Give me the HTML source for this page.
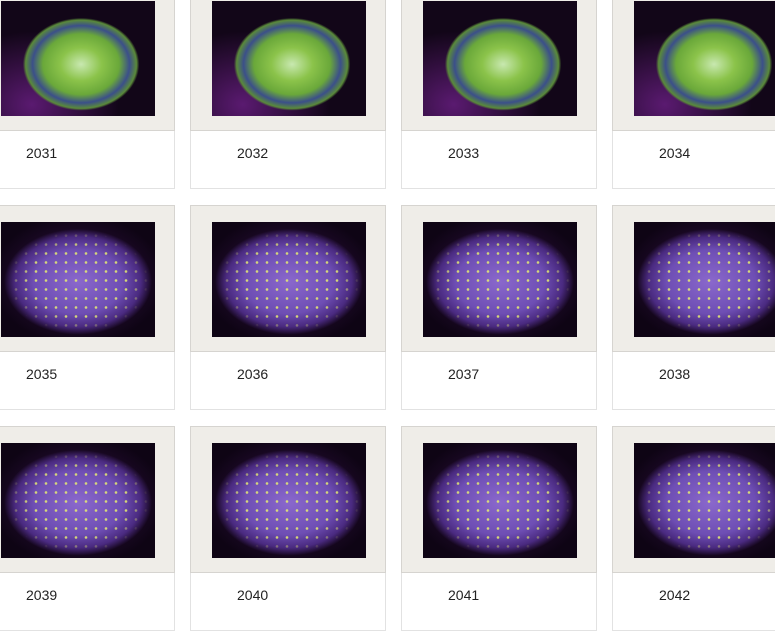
<!DOCTYPE html>
<html><head><meta charset="utf-8"><style>
body{margin:0;width:775px;height:625px;overflow:hidden;background:#fff;position:relative;font-family:"Liberation Sans",sans-serif}
.c{position:absolute;width:196px;height:204px}
.f{position:absolute;left:0;top:0;width:194px;height:145px;background:#efede8;border:1px solid #d6d4d0}
.l{position:absolute;left:0;top:147px;width:194px;height:57px;border-left:1px solid #e2e2e2;border-right:1px solid #e2e2e2;border-bottom:1px solid #e2e2e2}
.i{position:absolute;left:21px;top:16px;width:154px;height:115px;background:#0e0414;overflow:hidden}
.t{position:absolute;left:47px;top:161px;font-size:14px;color:#222}
.g{background:radial-gradient(ellipse 45% 48% at 52% 55%,#c8e8b0 0%,#8bc34a 30%,#6aa83a 55%,#3b4f8a 70%,#5a8a3a 80%,transparent 84%),radial-gradient(ellipse at 20% 90%,#5a1a70,transparent 50%),#120618}
.p{background:radial-gradient(ellipse 48% 46% at 50% 52%,#8a68cc 0%,#6e4eb4 60%,#4a2a80 85%,transparent 100%),radial-gradient(ellipse at 50% 50%,#3a1450,#0e0414 80%)}
.d{position:absolute;inset:0;background:radial-gradient(circle,#e8f070 0 1px,transparent 1.6px) 0 0/10px 9px;-webkit-mask-image:radial-gradient(ellipse 46% 44% at 50% 52%,#000 70%,transparent 100%);mask-image:radial-gradient(ellipse 46% 44% at 50% 52%,#000 70%,transparent 100%);opacity:.85}
</style></head><body>
<script>
const xs=[-21,190,401,612],ys=[-16,205,426];let n=2031,h='';
for(let r=0;r<3;r++)for(let c=0;c<4;c++){h+=`<div class="c" style="left:${xs[c]}px;top:${ys[r]}px"><div class="f"><div class="i ${r==0?'g':'p'}">${r?'<div class="d"></div>':''}</div></div><div class="l"></div><div class="t">${n++}</div></div>`}
document.body.insertAdjacentHTML('beforeend',h);
</script>
</body></html>
